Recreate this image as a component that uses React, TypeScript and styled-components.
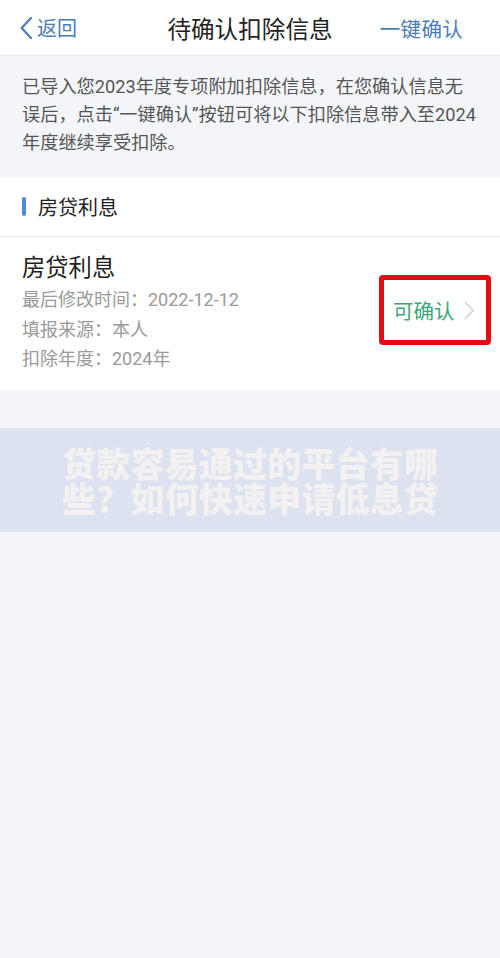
import styled, { createGlobalStyle } from "styled-components";

const GlobalStyle = createGlobalStyle`
  html, body {
    margin: 0;
    padding: 0;
    background: #f4f5f9;
  }
  body {
    font-family: Roboto, "Noto Sans CJK SC", "Noto Sans", sans-serif;
  }
`;

const Page = styled.div`
  width: 500px;
  min-height: 958px;
  background: #f4f5f9;
`;

const NavBar = styled.header`
  display: grid;
  grid-template-columns: 1fr auto 1fr;
  align-items: center;
  height: 56px;
  padding: 0 20px;
  background: #fff;
  border-bottom: 1px solid #e9eaee;
  box-sizing: border-box;
`;

const BackButton = styled.div`
  display: flex;
  align-items: center;
  gap: 5px;
  color: #4a7db6;
  font-size: 20px;
`;

const Title = styled.h1`
  margin: 0;
  font-size: 23.6px;
  font-weight: 400;
  color: #222;
`;

const NavAction = styled.div`
  justify-self: end;
  padding-right: 17px;
  color: #4a7db6;
  font-size: 20.5px;
  letter-spacing: 0.3px;
`;

const Notice = styled.p`
  width: 459px;
  margin: 0;
  padding: 17px 0 20px 22px;
  font-size: 18.2px;
  line-height: 28px;
  color: #555;
`;

const Section = styled.section`
  background: #fff;
`;

const SectionHead = styled.div`
  display: flex;
  align-items: center;
  gap: 12px;
  height: 59px;
  padding-left: 22px;
  border-bottom: 1px solid #eceef2;
  font-size: 20px;
  color: #222;

  &::before {
    content: "";
    width: 4px;
    height: 19px;
    border-radius: 2px;
    background: #4a8ad8;
  }
`;

const Item = styled.div`
  display: flex;
  align-items: center;
  justify-content: space-between;
  padding: 16px 9px 16px 22px;
`;

const ItemInfo = styled.div`
  display: flex;
  flex-direction: column;
`;

const ItemTitle = styled.div`
  font-size: 23.3px;
  color: #222;
  line-height: 30px;
  margin-bottom: 2px;
`;

const ItemLine = styled.div`
  font-size: 18px;
  line-height: 29.5px;
  color: #9a9a9a;
`;

const StatusBox = styled.div`
  display: flex;
  align-items: center;
  gap: 9px;
  width: 112px;
  height: 70px;
  margin-top: -6px;
  padding-left: 9px;
  box-sizing: border-box;
  border: 5px solid #e20d14;
  border-radius: 4px;
  color: #3aa679;
  font-size: 20.5px;
`;

const Watermark = styled.div`
  margin-top: 38px;
  height: 104px;
  display: flex;
  align-items: center;
  justify-content: center;
  background: #dce2ef;
`;

const WatermarkText = styled.div`
  width: 376px;
  font-family: "Noto Sans CJK SC", sans-serif;
  font-size: 34px;
  line-height: 35px;
  font-weight: 900;
  color: #f3f1f1;
  text-align: justify;
  text-align-last: justify;
`;

function Chevron({
  color,
  size,
  stroke,
  flip = false,
}: {
  color: string;
  size: number;
  stroke: number;
  flip?: boolean;
}) {
  return (
    <svg
      width={size * 0.55}
      height={size}
      viewBox="0 0 11 20"
      fill="none"
      style={flip ? { transform: "scaleX(-1)" } : undefined}
    >
      <path
        d="M10 1 L1.5 10 L10 19"
        stroke={color}
        strokeWidth={stroke}
        strokeLinecap="round"
        strokeLinejoin="round"
      />
    </svg>
  );
}

export default function App() {
  return (
    <Page>
      <GlobalStyle />
      <NavBar>
        <BackButton>
          <Chevron color="#4a7db6" size={22} stroke={2} />
          <span>返回</span>
        </BackButton>
        <Title>待确认扣除信息</Title>
        <NavAction>一键确认</NavAction>
      </NavBar>
      <Notice>
        已导入您2023年度专项附加扣除信息，在您确认信息无误后，点击“一键确认”按钮可将以下扣除信息带入至2024年度继续享受扣除。
      </Notice>
      <Section>
        <SectionHead>房贷利息</SectionHead>
        <Item>
          <ItemInfo>
            <ItemTitle>房贷利息</ItemTitle>
            <ItemLine>最后修改时间：2022-12-12</ItemLine>
            <ItemLine>填报来源：本人</ItemLine>
            <ItemLine>扣除年度：2024年</ItemLine>
          </ItemInfo>
          <StatusBox>
            <span>可确认</span>
            <Chevron color="#d0d0d0" size={19} stroke={1.5} flip />
          </StatusBox>
        </Item>
      </Section>
      <Watermark>
        <WatermarkText>贷款容易通过的平台有哪些？如何快速申请低息贷</WatermarkText>
      </Watermark>
    </Page>
  );
}
